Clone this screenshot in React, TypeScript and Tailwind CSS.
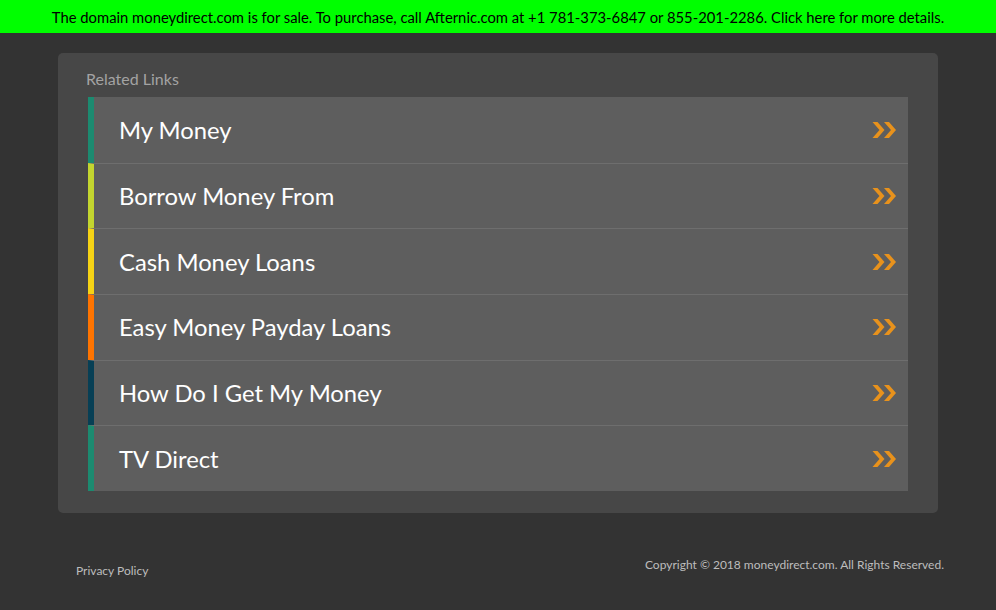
const links = [
  { label: "My Money", color: "border-[#1c8a70]" },
  { label: "Borrow Money From", color: "border-[#c3d52f]" },
  { label: "Cash Money Loans", color: "border-[#f6d315]" },
  { label: "Easy Money Payday Loans", color: "border-[#ff7400]" },
  { label: "How Do I Get My Money", color: "border-[#073f55]" },
  { label: "TV Direct", color: "border-[#1c8a70]" },
];

function Chevrons() {
  return (
    <svg width="26" height="18" viewBox="0 0 26 18" className="text-[#e8921c]">
      <path d="M0.5 1 L5.5 1 L12.5 9 L5.5 17 L0.5 17 L7.5 9 Z" fill="currentColor" />
      <path d="M12 1 L17 1 L24 9 L17 17 L12 17 L19 9 Z" fill="currentColor" />
    </svg>
  );
}

export default function App() {
  return (
    <div className="min-h-[610px] bg-[#333333] font-['Lato',sans-serif]">
      <div className="h-[33px] bg-[#00ff00] flex items-center justify-center pt-[2px] text-[14.8px] text-black">
        The domain moneydirect.com is for sale. To purchase, call Afternic.com at +1 781-373-6847 or 855-201-2286. Click here for more details.
      </div>

      <div className="px-[58px] pt-[20px]">
        <div className="bg-[#474747] rounded-[5px] pt-[16px] pb-[22px] px-[30px]">
          <div className="text-[16px] text-[#a3a3a3] -ml-[2px] mb-[9px] leading-[19px]">Related Links</div>
          <ul>
            {links.map((l, i) => (
              <li
                key={l.label}
                className={`h-[65.67px] bg-[#5e5e5e] border-l-[6px] ${l.color} flex items-center justify-between pl-[25px] pr-[10px] ${i > 0 ? "border-t border-t-[#6e6e6e]" : ""}`}
              >
                <span className="text-[23.8px] text-white pt-[2px]">{l.label}</span>
                <Chevrons />
              </li>
            ))}
          </ul>
        </div>
      </div>

      <div className="flex justify-between pl-[76px] pr-[52px] pt-[43px] text-[12px] text-[#bdbdbd]">
        <a className="mt-[6px]">Privacy Policy</a>
        <span>Copyright © 2018 moneydirect.com. All Rights Reserved.</span>
      </div>
    </div>
  );
}
